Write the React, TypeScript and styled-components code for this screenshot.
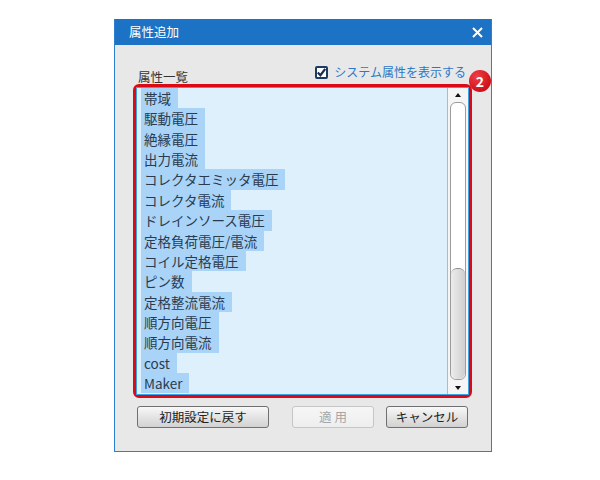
import React from "react";
import styled, { createGlobalStyle } from "styled-components";

const GlobalStyle = createGlobalStyle`
  body {
    margin: 0;
    background: #ffffff;
    font-family: "Noto Sans CJK JP", "Noto Sans", sans-serif;
  }
`;

const Dialog = styled.div`
  box-sizing: border-box;
  width: 378px;
  height: 433px;
  margin: 19px 0 0 114px;
  display: flex;
  flex-direction: column;
  background: #e8e8e8;
  border: 1px solid #2f7fcf;
  border-top: none;
`;

const TitleBar = styled.div`
  height: 26px;
  display: flex;
  align-items: center;
  justify-content: space-between;
  padding: 0 8px 0 14px;
  background: #1c73c5;
  color: #ffffff;
`;

const Title = styled.span`
  font-size: 12.5px;
  line-height: 14px;
`;

const CloseButton = styled.div`
  width: 11px;
  height: 11px;
  display: flex;
  margin-top: 1px;
`;

const Body = styled.div`
  flex: 1;
  display: flex;
  flex-direction: column;
  padding: 0 19px 0 18px;
`;

const Header = styled.div`
  height: 39px;
  display: flex;
  justify-content: space-between;
  align-items: flex-end;
`;

const Label = styled.span`
  margin-left: 5px;
  font-size: 12.5px;
  line-height: 14px;
  color: #333333;
`;

const CheckOption = styled.label`
  display: flex;
  align-items: center;
  gap: 6px;
  margin: 0 6px 5px 0;
  font-size: 12px;
  line-height: 14px;
  color: #2b78c9;
`;

const CheckBox = styled.span`
  box-sizing: border-box;
  width: 13px;
  height: 13px;
  display: flex;
  align-items: center;
  justify-content: center;
  background: #ffffff;
  border: 2px solid #1d3a62;
  border-radius: 2px;
`;

const Frame = styled.div`
  position: relative;
  border: 3px solid #dc0a14;
  border-radius: 6px;
`;

const Badge = styled.div`
  position: absolute;
  top: -17px;
  right: -22px;
  width: 22px;
  height: 22px;
  border-radius: 50%;
  background: radial-gradient(circle at 35% 30%, #ef4045, #cf101a 70%);
  color: #ffffff;
  font-size: 14px;
  font-weight: bold;
  line-height: 22px;
  text-align: center;
`;

const ListBox = styled.div`
  display: flex;
  height: 306px;
  background: #ddf0fc;
  border: 1px solid #3aa3e8;
`;

const Items = styled.div`
  flex: 1;
  display: flex;
  flex-direction: column;
  align-items: flex-start;
  padding-left: 4px;
`;

const Item = styled.div<{ $selected?: boolean }>`
  height: 20.36px;
  padding: 0 7px 0 3px;
  font-size: 13.5px;
  line-height: 20.36px;
  color: #2a3b50;
  white-space: nowrap;
  background: ${(p) => (p.$selected ? "#a9d3f7" : "transparent")};
`;

const ScrollBar = styled.div`
  width: 20px;
  display: flex;
  flex-direction: column;
  align-items: center;
  background: #f5f5f5;
  border-left: 1px solid #b8b8b8;
`;

const Arrow = styled.div<{ $down?: boolean }>`
  height: 13px;
  display: flex;
  align-items: center;
  justify-content: center;
  &::after {
    content: "";
    border-left: 3.5px solid transparent;
    border-right: 3.5px solid transparent;
    ${(p) =>
      p.$down
        ? "border-top: 4px solid #111111;"
        : "border-bottom: 4px solid #111111;"}
  }
`;

const Track = styled.div`
  box-sizing: border-box;
  flex: 1;
  width: 16px;
  margin: 1px 0;
  display: flex;
  flex-direction: column;
  justify-content: flex-end;
  background: #ffffff;
  border: 1px solid #9c9c9c;
  border-radius: 6px;
`;

const Thumb = styled.div`
  height: 110px;
  background: linear-gradient(to right, #ececec, #cfcfcf);
  border-top: 1px solid #8e8e8e;
  border-radius: 6px;
`;

const ButtonRow = styled.div`
  display: flex;
  align-items: center;
  gap: 12px;
  padding: 8px 4px 0 4px;
`;

const Button = styled.button<{ $wide?: boolean }>`
  box-sizing: border-box;
  width: ${(p) => (p.$wide ? "132px" : "82px")};
  height: 22px;
  padding: 0;
  font-family: inherit;
  font-size: 12.5px;
  line-height: 14px;
  color: #222222;
  background: linear-gradient(#f8f8f8, #e4e4e4 50%, #d2d2d2);
  border: 1px solid #707070;
  border-radius: 3px;
  &:first-child {
    margin-right: auto;
  }
  &:disabled {
    color: #a6a6a6;
    background: linear-gradient(#f6f6f6, #eeeeee);
    border-color: #c6c6c6;
  }
`;

const items = [
  "帯域",
  "駆動電圧",
  "絶縁電圧",
  "出力電流",
  "コレクタエミッタ電圧",
  "コレクタ電流",
  "ドレインソース電圧",
  "定格負荷電圧/電流",
  "コイル定格電圧",
  "ピン数",
  "定格整流電流",
  "順方向電圧",
  "順方向電流",
  "cost",
  "Maker",
];

export default function App() {
  return (
    <>
      <GlobalStyle />
      <Dialog>
        <TitleBar>
          <Title>属性追加</Title>
          <CloseButton>
            <svg width="11" height="11" viewBox="0 0 11 11">
              <path d="M1 1 L10 10 M10 1 L1 10" stroke="#ffffff" strokeWidth="2" />
            </svg>
          </CloseButton>
        </TitleBar>
        <Body>
          <Header>
            <Label>属性一覧</Label>
            <CheckOption>
              <CheckBox>
                <svg width="9" height="9" viewBox="0 0 9 9">
                  <path d="M0.8 4.5 L3.4 7.2 L8.2 1" stroke="#1b2d4c" strokeWidth="2.2" fill="none" />
                </svg>
              </CheckBox>
              システム属性を表示する
            </CheckOption>
          </Header>
          <Frame>
            <ListBox>
              <Items>
                {items.map((name) => (
                  <Item key={name} $selected>
                    {name}
                  </Item>
                ))}
              </Items>
              <ScrollBar>
                <Arrow />
                <Track>
                  <Thumb />
                </Track>
                <Arrow $down />
              </ScrollBar>
            </ListBox>
            <Badge>2</Badge>
          </Frame>
          <ButtonRow>
            <Button $wide>初期設定に戻す</Button>
            <Button disabled>適 用</Button>
            <Button>キャンセル</Button>
          </ButtonRow>
        </Body>
      </Dialog>
    </>
  );
}
